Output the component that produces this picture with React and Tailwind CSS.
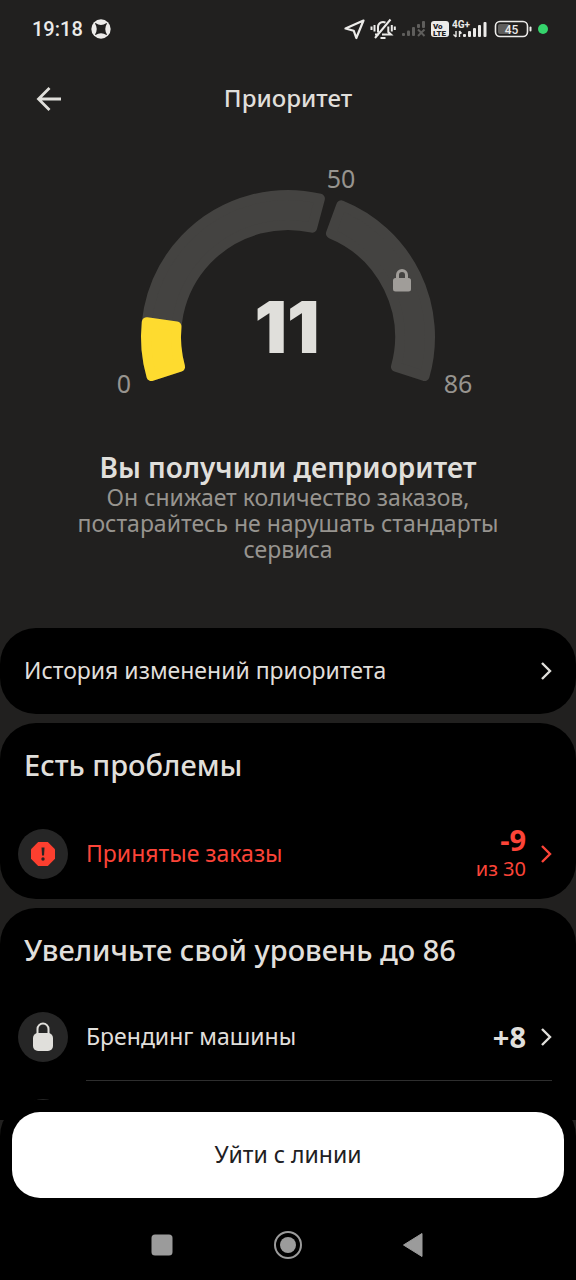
const FONT = "font-['Noto_Sans','Open_Sans',sans-serif]";

const CENTER_X = 288;
const CENTER_Y = 337;
const OUTER = 147;
const INNER = 107;
const CORNER = 5;

function polar(radius, angle) {
  const rad = (angle * Math.PI) / 180;
  return `${(CENTER_X + radius * Math.cos(rad)).toFixed(2)} ${(CENTER_Y - radius * Math.sin(rad)).toFixed(2)}`;
}

// The path is inset by CORNER and stroked with round joins, which rounds the corners.
function segmentPath(from, to) {
  const outer = OUTER - CORNER;
  const inner = INNER + CORNER;
  const outerPad = (CORNER / outer) * (180 / Math.PI);
  const innerPad = (CORNER / inner) * (180 / Math.PI);

  return [
    `M ${polar(outer, from - outerPad)}`,
    `A ${outer} ${outer} 0 0 1 ${polar(outer, to + outerPad)}`,
    `L ${polar(inner, to + innerPad)}`,
    `A ${inner} ${inner} 0 0 0 ${polar(inner, from - innerPad)}`,
    "Z",
  ].join(" ");
}

const SEGMENTS = [
  { id: "base", from: 198, to: 75, color: "#444341" },
  { id: "locked", from: 70, to: -18, color: "#444341" },
  { id: "value", from: 198, to: 172, color: "#fedb2f" },
];

function Gauge() {
  return (
    <svg
      viewBox="100 160 376 240"
      className={`mx-auto mt-5 block h-[240px] w-[376px] ${FONT}`}
    >
      {SEGMENTS.map((segment) => (
        <path
          key={segment.id}
          d={segmentPath(segment.from, segment.to)}
          fill={segment.color}
          stroke={segment.color}
          strokeWidth={CORNER * 2}
          strokeLinejoin="round"
        />
      ))}
      <rect x="393" y="278" width="18" height="13.500" rx="2.500" fill="#a09d99" />
      <path
        d="M397.500 279v-4a4.500 4.500 0 0 1 9 0v4"
        fill="none"
        stroke="#a09d99"
        strokeWidth="3"
      />
      <g fill="#97948f" fontSize="25" textAnchor="middle">
        <text x="341" y="188">50</text>
        <text x="124" y="393">0</text>
        <text x="458" y="393">86</text>
      </g>
      <text
        x="287"
        y="353"
        textAnchor="middle"
        fill="#e0dfdb"
        className="font-['Inter',sans-serif] text-[72px] font-black"
      >
        11
      </text>
    </svg>
  );
}

function StatusBar() {
  return (
    <div className="flex h-[58px] shrink-0 items-center justify-between pr-7 pl-8 text-[#ecebe9]">
      <div className="flex items-center gap-2">
        <span className="font-['Roboto',sans-serif] text-xl font-medium">19:18</span>
        <svg viewBox="0 0 20 20" className="size-5">
          <circle cx="10" cy="10" r="9.700" fill="currentColor" />
          <path
            d="M4.500 4 Q10 8 15.500 4 L16 4.500 Q12.500 10 16 15.500 L15.500 16 Q10 12.500 4.500 16 L4 15.500 Q7.500 10 4 4.500Z"
            fill="#21201f"
          />
        </svg>
      </div>

      <div className="flex items-center">
        <svg viewBox="0 0 22 22" className="mr-1 size-[22px]">
          <path
            d="M19.500 2.500 1.500 10.500l8.200 2.200 2.600 7.300Z"
            fill="none"
            stroke="currentColor"
            strokeWidth="2.200"
            strokeLinejoin="round"
          />
        </svg>
        <svg
          viewBox="0 0 26 22"
          className="mr-1.5 h-[22px] w-[26px]"
          fill="none"
          stroke="currentColor"
          strokeWidth="2"
        >
          <path d="M5 16.500h3.500M8 14.500V9a5 5 0 0 1 7.500-4.300M18.300 8.500v5.500l2.700 2.500H12" />
          <path d="M20.500 1.500 5 20M10.500 20h5" />
          <path d="M4.500 7v6.500M1.500 8.500v3.500M21.800 7v6.500M24.800 8.500v3.500" />
        </svg>
        <svg viewBox="0 0 24 18" className="mr-1 h-[18px] w-6" fill="#5f5e5c">
          <rect x="0" y="13" width="3" height="3" rx="1" />
          <rect x="5" y="10.500" width="3" height="5.500" rx="1" />
          <rect x="10" y="7" width="3" height="9" rx="1" />
          <rect x="15" y="4" width="3" height="4" rx="1" />
          <rect x="20" y="1" width="3" height="7" rx="1" />
          <path d="m16 9.500 6.500 6.500m0-6.500-6.500 6.500" stroke="#5f5e5c" strokeWidth="2" />
        </svg>
        <svg viewBox="0 0 20 18" className="mr-0.5 h-[18px] w-5">
          <rect x="1" y="1" width="18" height="16" rx="3" fill="currentColor" />
          <g
            fill="#21201f"
            className="font-['Roboto',sans-serif] font-black"
            fontSize="8"
          >
            <text x="3" y="8.500">Vo</text>
            <text x="3" y="15.500">LTE</text>
          </g>
        </svg>
        <svg viewBox="0 0 36 20" className="mr-1.5 h-5 w-9" fill="currentColor">
          <text
            x="0"
            y="8.500"
            fontSize="10"
            className="font-['Roboto',sans-serif] font-bold"
          >
            4G+
          </text>
          <path
            d="M4 12v6M1.500 15.500 4 18M7.500 18v-6M7.500 12l2 2.500"
            fill="none"
            stroke="currentColor"
            strokeWidth="1.400"
          />
          <rect x="11" y="15" width="3" height="3" rx="1" />
          <rect x="16" y="12" width="3" height="6" rx="1" />
          <rect x="21" y="9" width="3" height="9" rx="1" />
          <rect x="26" y="6" width="3" height="12" rx="1" />
          <rect x="31.500" y="3" width="3" height="15" rx="1" />
        </svg>
        <svg viewBox="0 0 38 18" className="mr-1.5 h-[18px] w-[38px]">
          <rect x="4" y="4" width="12" height="10" rx="2" fill="#5f5e5c" />
          <rect
            x="1.500"
            y="1.500"
            width="32"
            height="15"
            rx="4.500"
            fill="none"
            stroke="currentColor"
            strokeWidth="1.600"
          />
          <rect x="35.500" y="6.500" width="2" height="5" rx="1" fill="currentColor" />
          <text
            x="17.500"
            y="13.500"
            textAnchor="middle"
            fontSize="12"
            fill="currentColor"
            className="font-['Roboto',sans-serif] font-medium"
          >
            45
          </text>
        </svg>
        <span className="size-2.5 rounded-full bg-[#35d46c]" />
      </div>
    </div>
  );
}

function Chevron() {
  return (
    <svg
      viewBox="0 0 12 20"
      className="h-5 w-3 shrink-0"
      fill="none"
      stroke="currentColor"
      strokeWidth="2.400"
    >
      <path d="m2 2 8 8-8 8" />
    </svg>
  );
}

function AlertIcon() {
  return (
    <svg viewBox="0 0 24 24" className="size-6">
      <path d="M7.200 0h9.600L24 7.200v9.600L16.800 24H7.200L0 16.800V7.200Z" fill="#fc3f2f" />
      <path d="M10.500 5.500h3l-.5 8h-2Z" fill="#262524" />
      <circle cx="12" cy="17" r="1.700" fill="#262524" />
    </svg>
  );
}

function LockIcon() {
  return (
    <svg viewBox="0 0 24 30" className="h-[30px] w-6">
      <rect x="2" y="11" width="20" height="18" rx="5" fill="#e0dfdb" />
      <path
        d="M6.500 13V7a5.500 5.500 0 0 1 11 0v6"
        fill="none"
        stroke="#e0dfdb"
        strokeWidth="2"
      />
    </svg>
  );
}

function PriorityRow({ icon, title, value, hint, danger }) {
  return (
    <button
      type="button"
      className={`flex min-h-[86px] w-full items-center py-4 pr-6 pl-[18px] text-left ${danger ? "text-[#fc4438]" : "text-[#e0dfdb]"}`}
    >
      <span className="flex size-[50px] shrink-0 items-center justify-center rounded-full bg-[#262626]">
        {icon}
      </span>
      <span className="ml-[18px] flex-1 pb-0.5 text-[23px]">{title}</span>
      <span className="mr-3.5 text-right">
        <span className="block text-[29px] leading-[30px] font-bold">{value}</span>
        {hint ? <span className="block text-xl leading-7">{hint}</span> : null}
      </span>
      <Chevron />
    </button>
  );
}

function SectionTitle({ children }) {
  return (
    <h2 className="px-6 pt-6 pb-[26px] text-[29px] leading-9 font-medium">{children}</h2>
  );
}

export default function App() {
  return (
    <div className={`flex h-screen flex-col bg-[#21201f] text-[#e0dfdb] ${FONT}`}>
      <StatusBar />

      <header className="grid h-[82px] shrink-0 grid-cols-[64px_1fr_64px] items-center px-4">
        <button type="button" aria-label="Назад" className="flex justify-center">
          <svg
            viewBox="0 0 26 26"
            className="size-[26px]"
            fill="none"
            stroke="currentColor"
            strokeWidth="2.800"
          >
            <path d="M26 13H3.500M14.500 2 3.500 13l11 11" />
          </svg>
        </button>
        <h1 className="pb-0.5 text-center text-2xl font-medium">Приоритет</h1>
      </header>

      <main className="min-h-0 flex-1 overflow-y-auto [scrollbar-width:none]">
        <Gauge />

        <section className="mt-[50px] px-16 text-center">
          <h2 className="text-[28px] leading-[34px] font-semibold">Вы получили деприоритет</h2>
          <p className="text-[23px] leading-[26px] text-[#97948f]">
            Он снижает количество заказов, постарайтесь не нарушать стандарты сервиса
          </p>
        </section>

        <div className="mt-[66px] flex flex-col gap-[9px]">
          <button
            type="button"
            className="flex h-[86px] items-center justify-between rounded-[36px] bg-black px-6 text-left text-[23px]"
          >
            <span className="pb-0.5">История изменений приоритета</span>
            <Chevron />
          </button>

          <section className="rounded-[36px] bg-black">
            <SectionTitle>Есть проблемы</SectionTitle>
            <PriorityRow
              icon={<AlertIcon />}
              title="Принятые заказы"
              value="-9"
              hint="из 30"
              danger
            />
          </section>

          <section className="rounded-t-[36px] bg-black pb-10">
            <SectionTitle>Увеличьте свой уровень до 86</SectionTitle>
            <PriorityRow icon={<LockIcon />} title="Брендинг машины" value="+8" />
            <div className="mr-6 ml-[86px] border-t border-[#2e2e2e]" />
            <div className="mt-[18px] ml-[18px] size-[50px] rounded-full bg-[#262626]" />
          </section>
        </div>
      </main>

      <footer className="relative -mt-5 shrink-0 rounded-t-[36px] bg-black px-3 pt-3">
        <button
          type="button"
          className="h-[86px] w-full rounded-[28px] bg-white pb-0.5 text-[23px] text-[#21201f]"
        >
          Уйти с линии
        </button>
        <nav className="mt-3 flex h-[70px] items-center justify-center gap-[98px] text-[#9b9b9b]">
          <button type="button" aria-label="Недавние приложения">
            <svg viewBox="0 0 28 28" className="size-7" fill="currentColor">
              <rect x="3.500" y="3.500" width="21" height="21" rx="3.500" />
            </svg>
          </button>
          <button type="button" aria-label="Домой">
            <svg viewBox="0 0 28 28" className="size-7">
              <circle cx="14" cy="14" r="13" fill="none" stroke="currentColor" strokeWidth="2" />
              <circle cx="14" cy="14" r="8" fill="currentColor" />
            </svg>
          </button>
          <button type="button" aria-label="Назад">
            <svg viewBox="0 0 28 28" className="size-7" fill="currentColor">
              <path d="M3.500 14 22 2.500v23Z" stroke="currentColor" strokeLinejoin="round" />
            </svg>
          </button>
        </nav>
      </footer>
    </div>
  );
}
